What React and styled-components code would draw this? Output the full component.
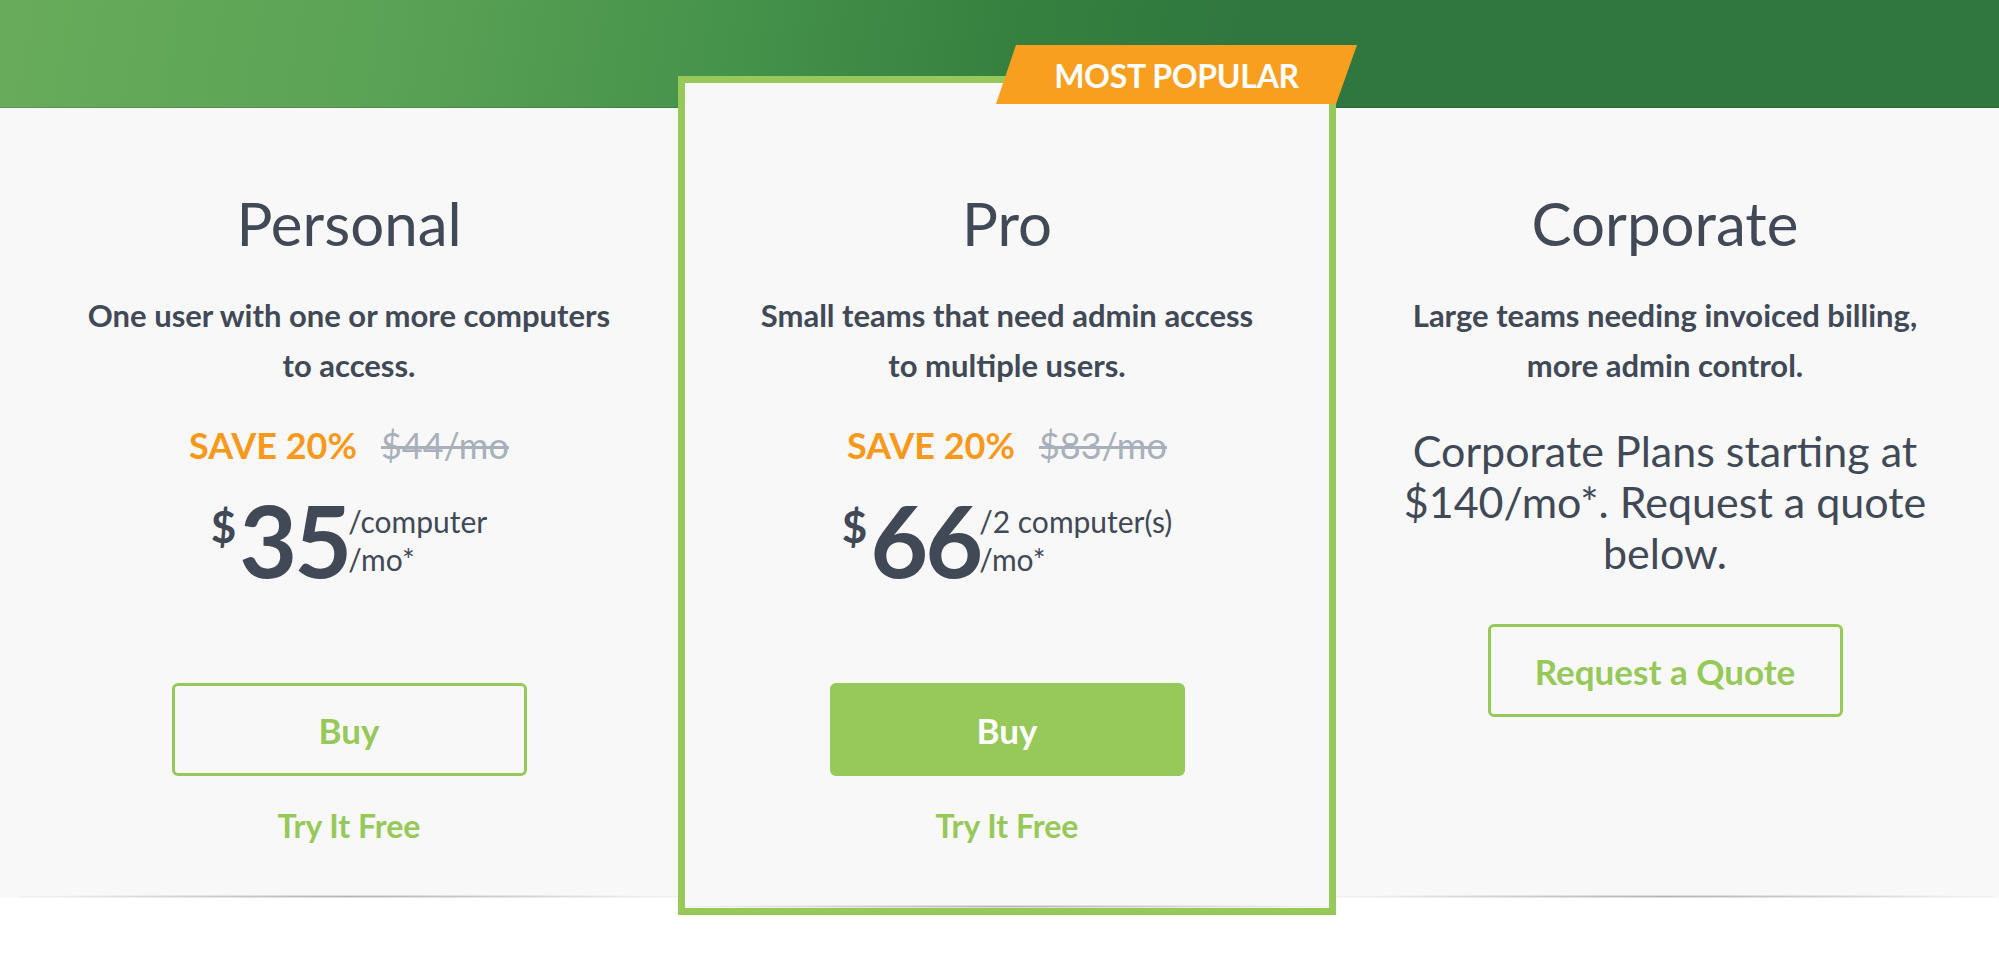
import React from "react";
import styled, { createGlobalStyle, css } from "styled-components";

const GlobalStyle = createGlobalStyle`
  html, body { margin: 0; padding: 0; background: #ffffff; }
  body { font-family: Lato, "Open Sans", sans-serif; color: #414957; }
  * { box-sizing: border-box; }
`;

const green = "#97c95a";
const ink = "#414957";

const Page = styled.div`
  width: 100%;
  background: #ffffff;
`;

const Header = styled.header`
  height: 108px;
  background: linear-gradient(100deg, #68ac5b 0%, #5aa255 20%, #45924b 37%, #36813f 50%, #2f773f 62%, #2f773f 100%);
  box-shadow: inset 0 -1px 0 rgba(0, 0, 0, 0.12);
`;

const Section = styled.section`
  background: linear-gradient(#f8f8f8, #f8f8f8) no-repeat top left / 100% calc(100% - 17px);
`;

const Grid = styled.div`
  display: grid;
  grid-template-columns: repeat(3, 1fr);
  padding: 0 5px 0 20px;
  align-items: stretch;
`;

const Column = styled.div`
  position: relative;
  display: flex;
  flex-direction: column;
  align-items: center;
  text-align: center;
  padding: 79px 0 49px;
  margin-bottom: 17px;

  &::after {
    content: "";
    position: absolute;
    left: 0;
    right: 0;
    bottom: 0;
    height: 3px;
    background: radial-gradient(ellipse at center, rgba(0, 0, 0, 0.28) 0%, rgba(0, 0, 0, 0.08) 55%, rgba(0, 0, 0, 0) 80%);
  }

  ${(p) =>
    p.$featured &&
    css`
      margin: -32px 0 0;
      border: 7px solid ${green};
      background: #f8f8f8;
      padding: 104px 0 62px;
      z-index: 1;
    `}
`;

const Badge = styled.div`
  position: absolute;
  top: -38px;
  right: -28px;
  width: 361px;
  height: 59px;
  background: #f99f1f;
  clip-path: polygon(20px 0, 100% 0, calc(100% - 21px) 100%, 0 100%);
  display: flex;
  align-items: center;
  justify-content: center;
  padding-top: 2px;
  color: #ffffff;
  font-weight: 700;
  font-size: 32px;
  letter-spacing: -0.3px;
`;

const Title = styled.h2`
  margin: 0;
  font-weight: 400;
  font-size: 60px;
  line-height: 72px;
  color: ${ink};
`;

const Desc = styled.p`
  margin: 31px 0 0;
  font-weight: 700;
  font-size: 31px;
  line-height: 50px;
  color: ${ink};
`;

const SaveRow = styled.div`
  margin-top: 33px;
  display: flex;
  align-items: baseline;
  gap: 24px;
  font-size: 36px;
  line-height: 44px;
`;

const Save = styled.span`
  font-weight: 700;
  color: #f8991d;
`;

const OldPrice = styled.span`
  font-weight: 400;
  color: #a8b0bb;
  text-decoration: line-through;
  text-decoration-thickness: 3px;
`;

const PriceRow = styled.div`
  margin-top: 22px;
  display: flex;
  align-items: flex-start;
  justify-content: center;
  color: ${ink};
`;

const Currency = styled.span`
  font-weight: 700;
  font-size: 44px;
  line-height: 1;
  margin-top: 15px;
  margin-right: 3px;
`;

const Amount = styled.span`
  font-weight: 700;
  font-size: 100px;
  line-height: 100px;
  letter-spacing: -3px;
`;

const Suffix = styled.span`
  display: flex;
  flex-direction: column;
  align-items: flex-start;
  text-align: left;
  margin: 13px 0 0 -1px;
  font-weight: 400;
  font-size: 30px;
  line-height: 38px;
`;

const Button = styled.button`
  width: 355px;
  height: 93px;
  margin-top: ${(p) => p.$top}px;
  border: 3px solid ${green};
  border-radius: 6px;
  background: transparent;
  color: ${green};
  font-family: Lato, "Open Sans", sans-serif;
  font-weight: 700;
  font-size: 35px;
  cursor: pointer;

  ${(p) =>
    p.$filled &&
    css`
      background: ${green};
      color: #ffffff;
    `}
`;

const TryFree = styled.a`
  margin-top: 30px;
  font-weight: 700;
  font-size: 32px;
  line-height: 40px;
  color: ${green};
  text-decoration: none;
`;

const CorpText = styled.p`
  margin: 35px 0 0;
  font-weight: 400;
  font-size: 43px;
  line-height: 51px;
  color: ${ink};
`;

const plans = [
  {
    name: "Personal",
    desc: ["One user with one or more computers", "to access."],
    old: "$44/mo",
    amount: "35",
    unit: "/computer",
  },
  {
    name: "Pro",
    desc: ["Small teams that need admin access", "to multiple users."],
    old: "$83/mo",
    amount: "66",
    unit: "/2 computer(s)",
    featured: true,
  },
];

function PlanColumn({ plan }) {
  return (
    <Column $featured={plan.featured}>
      {plan.featured && <Badge>MOST POPULAR</Badge>}
      <Title>{plan.name}</Title>
      <Desc>
        {plan.desc[0]}
        <br />
        {plan.desc[1]}
      </Desc>
      <SaveRow>
        <Save>SAVE 20%</Save>
        <OldPrice>{plan.old}</OldPrice>
      </SaveRow>
      <PriceRow>
        <Currency>$</Currency>
        <Amount>{plan.amount}</Amount>
        <Suffix>
          <span>{plan.unit}</span>
          <span>/mo*</span>
        </Suffix>
      </PriceRow>
      <Button $top={94} $filled={plan.featured}>Buy</Button>
      <TryFree href="#">Try It Free</TryFree>
    </Column>
  );
}

export default function App() {
  return (
    <Page>
      <GlobalStyle />
      <Header />
      <Section>
        <Grid>
          {plans.map((p) => (
            <PlanColumn key={p.name} plan={p} />
          ))}
          <Column>
            <Title>Corporate</Title>
            <Desc>
              Large teams needing invoiced billing,
              <br />
              more admin control.
            </Desc>
            <CorpText>
              Corporate Plans starting at
              <br />
              $140/mo*. Request a quote
              <br />
              below.
            </CorpText>
            <Button $top={46}>Request a Quote</Button>
          </Column>
        </Grid>
      </Section>
    </Page>
  );
}
